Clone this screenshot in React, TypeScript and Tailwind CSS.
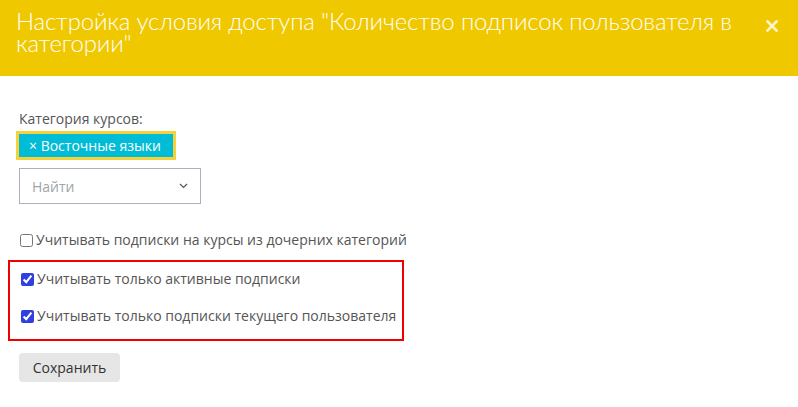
import React from "react";

export default function App() {
  return (
    <div className="w-[798px] h-[407px] bg-white overflow-hidden" style={{ fontFamily: "'Open Sans', 'Noto Sans', sans-serif" }}>
      <div className="h-[76px] bg-[#f0c800] flex items-start justify-between pl-4 pr-5 pt-[10px]">
        <h1 className="text-[24px] leading-[22px] font-light text-white w-[730px] tracking-[-0.2px]" style={{ fontFamily: "Lato, 'Open Sans', sans-serif" }}>
          Настройка условия доступа "Количество подписок пользователя в категории"
        </h1>
        <button className="mt-[10px] text-[#fff5cc]">
          <svg width="12" height="12" viewBox="0 0 12 12">
            <path d="M1.5 1.5 L10.5 10.5 M10.5 1.5 L1.5 10.5" stroke="currentColor" strokeWidth="2.6" strokeLinecap="square" />
          </svg>
        </button>
      </div>
      <div className="pl-[19px] pt-[34px]">
        <div className="text-[14px] leading-[18px] text-[#555]">Категория курсов:</div>
        <div className="mt-[3px] ml-[-3px] inline-flex border-[3px] border-[#f5d13a]">
          <span className="bg-[#00bcd6] text-white text-[14px] leading-[23px] pl-[10px] pr-[12px]">× Восточные языки</span>
        </div>
        <div className="mt-[8px] w-[182px] h-[36px] border border-[#aab1be] flex items-center justify-between pl-[12px] pr-[12px]">
          <span className="text-[14px] text-[#a0a4aa]">Найти</span>
          <svg width="9" height="6" viewBox="0 0 9 6"><path d="M1 1 L4.5 4.5 L8 1" stroke="#555" strokeWidth="1.2" fill="none" /></svg>
        </div>
        <label className="mt-[27px] flex items-center gap-[3px] text-[14px] leading-[18px] text-[#555]">
          <input type="checkbox" className="w-[13px] h-[13px] m-0 ml-[1px]" />
          Учитывать подписки на курсы из дочерних категорий
        </label>
        <div className="mt-[11px] ml-[-11px] w-[396px] h-[81px] border-2 border-[#f20000] flex flex-col pl-[10px] pt-[8px] gap-[19px]">
          <label className="flex items-center gap-[3px] text-[14px] leading-[18px] text-[#555]">
            <input type="checkbox" defaultChecked className="w-[13px] h-[13px] m-0 ml-[1px] accent-[#2f3fe0]" />
            Учитывать только активные подписки
          </label>
          <label className="flex items-center gap-[3px] text-[14px] leading-[18px] text-[#555]">
            <input type="checkbox" defaultChecked className="w-[13px] h-[13px] m-0 ml-[1px] accent-[#2f3fe0]" />
            Учитывать только подписки текущего пользователя
          </label>
        </div>
        <button className="mt-[12px] w-[101px] h-[29px] rounded-[4px] bg-[#e6e6e6] text-[14px] text-[#333]">Сохранить</button>
      </div>
    </div>
  );
}
